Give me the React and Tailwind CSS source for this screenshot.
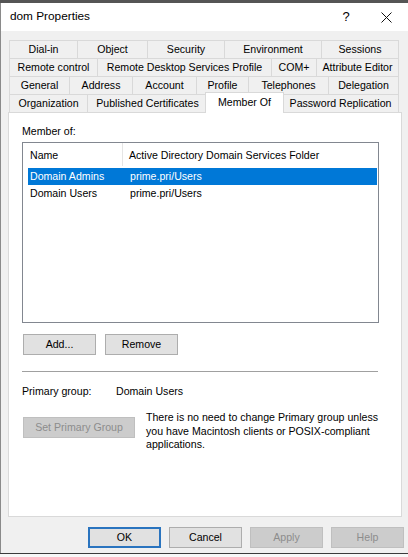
import React from "react";

const F = { fontFamily: '"Liberation Sans", Arial, sans-serif' };

function Tab({ w, children, last }) {
  return (
    <div
      className={`h-full flex items-center justify-center border-t border-l border-[#d9d9d9] bg-[#f0f0f0] text-[#000] whitespace-nowrap ${last ? "border-r" : ""}`}
      style={{ width: w }}
    >
      {children}
    </div>
  );
}

function Btn({ w, children, disabled, def }) {
  let cls = "h-[21px] flex items-center justify-center text-[10.6px] ";
  if (disabled) cls += "bg-[#cccccc] border border-[#bfbfbf] text-[#8c8c8c]";
  else if (def) cls += "bg-[#e1e1e1] border-2 border-[#2a74bf] text-black";
  else cls += "bg-[#e1e1e1] border border-[#adadad] text-black";
  return (
    <div className={cls} style={{ width: w }}>
      {children}
    </div>
  );
}

export default function App() {
  return (
    <div className="w-[408px] h-[557px] bg-[#f0f0f0] overflow-hidden flex flex-col text-[10.6px] text-black" style={F}>
      <div className="h-[3px] bg-[#555555] shrink-0" />
      <div className="flex-1 flex flex-col border-l border-[#8a8a8a]">
        {/* title bar */}
        <div className="h-[28px] bg-white flex items-center shrink-0">
          <div className="pl-[9px] text-[11.8px] flex-1 pb-[1px]">dom Properties</div>
          <div className="w-[20px] text-center text-[13px] mr-[25px]">?</div>
          <div className="w-[12px] mr-[15px] flex items-center">
            <svg width="11" height="11" viewBox="0 0 11 11">
              <path d="M0.5 0.5 L10.5 10.5 M10.5 0.5 L0.5 10.5" stroke="#111" strokeWidth="1" />
            </svg>
          </div>
        </div>

        {/* body */}
        <div className="flex-1 flex flex-col pl-[7px] pt-[9px]">
          <div className="ml-[1px] w-[390px] flex flex-col">
            <div className="h-[18px] flex">
              <Tab w={68}>Dial-in</Tab>
              <Tab w={70}>Object</Tab>
              <Tab w={77}>Security</Tab>
              <Tab w={97}>Environment</Tab>
              <Tab w={78} last>Sessions</Tab>
            </div>
            <div className="h-[18px] flex">
              <Tab w={88}>Remote control</Tab>
              <Tab w={174}>Remote Desktop Services Profile</Tab>
              <Tab w={45}>COM+</Tab>
              <Tab w={83} last>Attribute Editor</Tab>
            </div>
            <div className="h-[18px] flex">
              <Tab w={60}>General</Tab>
              <Tab w={63}>Address</Tab>
              <Tab w={64}>Account</Tab>
              <Tab w={52}>Profile</Tab>
              <Tab w={80}>Telephones</Tab>
              <Tab w={71} last>Delegation</Tab>
            </div>
            <div className="h-[18px] flex items-end">
              <Tab w={78}>Organization</Tab>
              <Tab w={120}>Published Certificates</Tab>
              <div className="relative z-10 w-[79px] h-[21px] -mx-[2px] -mb-[1px] bg-white border-t border-l border-r border-[#d9d9d9] flex items-start justify-center pt-[2px]">
                Member Of
              </div>
              <Tab w={117} last>Password Replication</Tab>
            </div>
          </div>

          {/* panel */}
          <div className="w-[394px] h-[405px] bg-white border border-[#d9d9d9] flex flex-col pl-[13px] pt-[11px]">
            <div className="h-[14px] leading-[14px]">Member of:</div>
            <div className="mt-[4px] w-[357px] h-[181px] border border-[#828790] flex flex-col">
              <div className="h-[25px] flex">
                <div className="w-[100px] h-[23px] border-r border-[#e5e5e5] flex items-center pl-[7px] pt-[2px]">Name</div>
                <div className="flex items-center pl-[6px] h-[23px] pt-[2px]">Active Directory Domain Services Folder</div>
              </div>
              <div className="ml-[5px] w-[349px] h-[17px] bg-[#0078d7] text-white flex items-center">
                <div className="w-[102px] pl-[2px]">Domain Admins</div>
                <div>prime.pri/Users</div>
              </div>
              <div className="ml-[5px] w-[349px] h-[17px] flex items-center">
                <div className="w-[102px] pl-[2px]">Domain Users</div>
                <div>prime.pri/Users</div>
              </div>
            </div>
            <div className="mt-[11px] ml-[1px] flex gap-[9px]">
              <Btn w={73}>Add...</Btn>
              <Btn w={73}>Remove</Btn>
            </div>
            <div className="mt-[16px] w-[356px] h-px bg-[#a0a0a0]" />
            <div className="mt-[12px] h-[14px] flex items-center pt-[1px]">
              <div className="w-[94px]">Primary group:</div>
              <div>Domain Users</div>
            </div>
            <div className="mt-[13px] flex items-start">
              <div className="mt-[6px] ml-[1px]">
                <Btn w={112} disabled>Set Primary Group</Btn>
              </div>
              <div className="ml-[11px] w-[236px] leading-[13.5px]">
                There is no need to change Primary group unless you have Macintosh clients or POSIX-compliant applications.
              </div>
            </div>
          </div>

          {/* bottom buttons */}
          <div className="mt-[10px] flex justify-end gap-[8px] pr-[4px]">
            <Btn w={73} def>OK</Btn>
            <Btn w={73}>Cancel</Btn>
            <Btn w={73} disabled>Apply</Btn>
            <Btn w={73} disabled>Help</Btn>
          </div>
        </div>
        <div className="h-[5px] shrink-0" />
      </div>
      <div className="h-px bg-[#3a3a3a] shrink-0" />
      <div className="h-[4px] bg-[#f7f7f7] shrink-0" />
    </div>
  );
}
